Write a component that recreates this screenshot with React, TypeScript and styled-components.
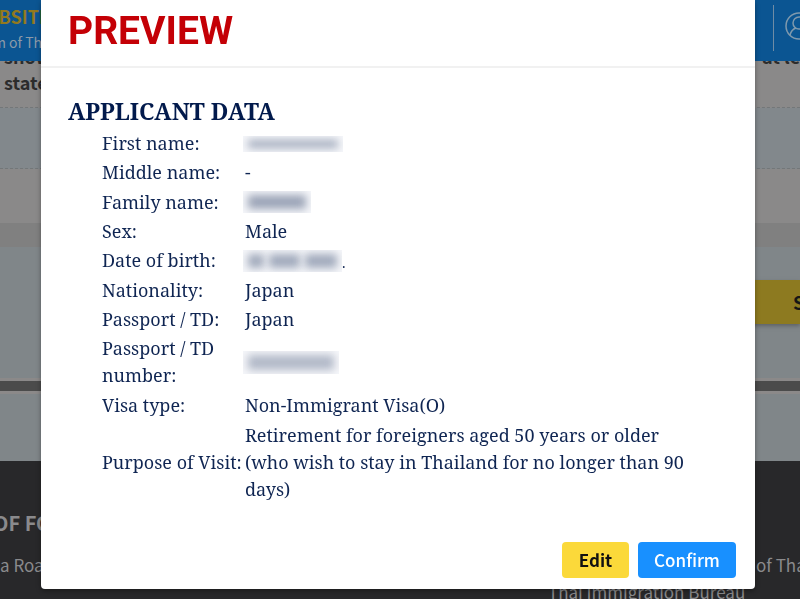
import React from "react";
import styled, { createGlobalStyle } from "styled-components";

const ui = `"Noto Sans CJK JP", "Noto Sans", sans-serif`;
const serif = `"Noto Serif", "DejaVu Serif Condensed", "DejaVu Serif", serif`;

const Global = createGlobalStyle`
  * { box-sizing: border-box; }
  html, body { margin: 0; height: 100%; overflow: hidden; }
  body { font-family: ${ui}; background: #28282a; }
`;

const Page = styled.div`
  min-height: 100vh;
  display: flex;
  flex-direction: column;
  overflow: hidden;
`;

const Header = styled.header`
  height: 61px;
  flex: none;
  display: flex;
  justify-content: space-between;
  background: #0b5592;
  overflow: hidden;
`;

const Brand = styled.div`
  width: 50px;
  padding-top: 3px;
  display: flex;
  flex-direction: column;
  align-items: flex-end;
  white-space: nowrap;
`;

const Site = styled.strong`
  font-size: 18px;
  line-height: 26px;
  color: #92791f;
`;

const Tagline = styled.span`
  font-size: 14px;
  line-height: 26px;
  color: #8c9aa8;
`;

const Account = styled.button`
  width: 27px;
  height: 46px;
  margin: 5px 0 0;
  padding: 0 0 0 11px;
  border: 0;
  border-left: 1px solid #6f8ca5;
  background: none;
  color: #7f99ad;
  overflow: hidden;
`;

const Band = styled.div<{ $h: number; $bg: string; $dashed?: boolean }>`
  height: ${(p) => p.$h}px;
  flex: none;
  background: ${(p) => p.$bg};
  border-bottom: ${(p) => (p.$dashed ? "1px dashed #737779" : "0")};
`;

const Notice = styled(Band)`
  display: flex;
  justify-content: space-between;
  overflow: hidden;
  font-size: 18px;
  font-weight: 700;
  line-height: 26px;
  color: #2c2c2c;
  white-space: nowrap;
`;

const NoticeText = styled.p`
  width: 42px;
  margin: -18px 0 0;
  padding-left: 4px;
`;

const FormArea = styled(Band)`
  display: flex;
  justify-content: flex-end;
  align-items: flex-start;
  padding-top: 33px;
`;

const Submit = styled.button`
  width: 60px;
  height: 44px;
  padding: 0 0 0 53px;
  border: 0;
  background: #8d7a20;
  box-shadow: 0 2px 4px #5d6265;
  color: #161616;
  font: 700 18px ${ui};
  text-align: left;
  overflow: hidden;
`;

const Rule = styled.hr`
  flex: none;
  width: 100%;
  height: 16px;
  margin: 0;
  border: solid #8b8989;
  border-width: 3px 0;
  background: #4b4b4b;
`;

const Footer = styled.footer`
  flex: 1;
  display: flex;
  justify-content: space-between;
  padding-top: 48px;
  background: #28282a;
  color: #8a8a8c;
  font-size: 17px;
  line-height: 27px;
  white-space: nowrap;
  overflow: hidden;
`;

const FootCol = styled.div<{ $w: number; $pad: number }>`
  width: ${(p) => p.$w}px;
  padding-top: ${(p) => p.$pad}px;
  overflow: hidden;
`;

const FootTitle = styled.h3`
  margin: 0 0 14px -7px;
  font-size: 20px;
  line-height: 28px;
`;

const FootLine = styled.p<{ $right?: boolean }>`
  margin: 0;
  padding-left: ${(p) => (p.$right ? "208px" : "0")};
`;

const Overlay = styled.div`
  position: fixed;
  inset: 0;
  padding: 0 45px 10px 41px;
  display: flex;
`;

const Dialog = styled.section`
  flex: 1;
  display: flex;
  flex-direction: column;
  background: #fff;
  border-radius: 0 0 4px 4px;
  box-shadow: 0 2px 5px rgba(0, 0, 0, 0.35);
`;

const DialogHead = styled.header`
  height: 68px;
  padding: 0 27px;
  border-bottom: 2px solid #f1f1f1;
`;

const Title = styled.h1`
  margin: 0;
  font-family: Roboto, sans-serif;
  font-size: 39px;
  line-height: 62px;
  color: #c40006;
`;

const DialogBody = styled.div`
  flex: 1;
  padding: 27px 27px 0;
  font-family: ${serif};
  color: #0f2552;
`;

const Section = styled.h2`
  margin: 0;
  font-size: 23px;
  line-height: 32px;
  color: #021a4c;
`;

const Data = styled.table`
  width: 600px;
  max-width: 100%;
  height: 375px;
  margin: 2px 0 0 34px;
  border-collapse: collapse;
  font-size: 18px;
  line-height: 27px;
`;

const Label = styled.th`
  width: 143px;
  padding: 1px 0;
  font-weight: 400;
  text-align: left;
  vertical-align: middle;
  white-space: pre;
`;

const Value = styled.td`
  padding: 1px 0;
  vertical-align: middle;
`;

const ValueLine = styled.div`
  display: flex;
  align-items: center;
  height: 27px;
  margin-left: -2px;
`;

const Hidden = styled.span<{ $w: number; $h: number }>`
  display: flex;
  gap: 5px;
  width: ${(p) => p.$w}px;
  height: ${(p) => p.$h}px;
  padding: 4px 5px;
  background: #f6f7fa;
  overflow: hidden;
`;

const Smudge = styled.span<{ $grow: number; $tone: string }>`
  flex: ${(p) => p.$grow};
  background: ${(p) => p.$tone};
  filter: blur(4px);
`;

const Tail = styled.span`
  align-self: flex-end;
  font-size: 14px;
  line-height: 22px;
`;

const Actions = styled.footer`
  display: flex;
  justify-content: flex-end;
  gap: 9px;
  padding: 0 19px 11px;
`;

const Action = styled.button<{ $primary?: boolean }>`
  width: ${(p) => (p.$primary ? 98 : 67)}px;
  height: 36px;
  padding: 0 0 2px;
  border: 0;
  border-radius: 4px;
  background: ${(p) => (p.$primary ? "#1890ff" : "#fbd93a")};
  color: ${(p) => (p.$primary ? "#fff" : "#111")};
  font: ${(p) => (p.$primary ? 500 : 700)} 17px ${ui};
`;

interface RedactedProps {
  width: number;
  height: number;
  tone: string;
  parts?: number[];
  tail?: string;
}

function Redacted({ width, height, tone, parts = [1], tail }: RedactedProps) {
  return (
    <ValueLine>
      <Hidden $w={width} $h={height}>
        {parts.map((grow, i) => <Smudge key={i} $grow={grow} $tone={tone} />)}
      </Hidden>
      {tail && <Tail>{tail}</Tail>}
    </ValueLine>
  );
}

const rows: [string, React.ReactNode][] = [
  ["First name:", <Redacted width={100} height={16} tone="#a0a9bb" />],
  ["Middle name:", "-"],
  ["Family name:", <Redacted width={68} height={22} tone="#9aa3b6" />],
  ["Sex:", "Male"],
  ["Date of birth:", <Redacted width={99} height={22} tone="#a0a9bb" parts={[2, 4, 4]} tail="." />],
  ["Nationality:", "Japan"],
  ["Passport / TD:", "Japan"],
  ["Passport / TD\nnumber:", <Redacted width={96} height={23} tone="#b1b8c7" />],
  ["Visa type:", "Non-Immigrant Visa(O)"],
  ["Purpose of Visit:", "Retirement for foreigners aged 50 years or older (who wish to stay in Thailand for no longer than 90 days)"],
];

export default function App() {
  return (
    <>
      <Global />
      <Page>
        <Header>
          <Brand><Site>WEBSITE</Site><Tagline>Kingdom of Tha</Tagline></Brand>
          <Account aria-label="Account">
            <svg width="29" height="29" viewBox="0 0 29 29" fill="none" stroke="currentColor" strokeWidth="1.5">
              <circle cx="14" cy="14" r="13" />
              <circle cx="14" cy="11" r="6" />
              <path d="M5 23c1-4 3-6 6-7M17 16c3 1 6 3 7 7" />
            </svg>
          </Account>
        </Header>
        <Notice $h={47} $bg="#8a8989" $dashed>
          <NoticeText>shown<br />state</NoticeText>
          <NoticeText>at least</NoticeText>
        </Notice>
        <Band $h={61} $bg="#82888c" $dashed />
        <Band $h={54} $bg="#8a8989" />
        <Band $h={24} $bg="#808080" />
        <FormArea $h={131} $bg="#808689"><Submit>Submit</Submit></FormArea>
        <Rule />
        <Band $h={67} $bg="#808689" />
        <Footer>
          <FootCol $w={41} $pad={0}>
            <FootTitle>OF FOREIGN</FootTitle>
            <FootLine>a Road</FootLine>
          </FootCol>
          <FootCol $w={252} $pad={42}>
            <FootLine $right>of Thailand</FootLine>
            <FootLine>Thai Immigration Bureau</FootLine>
          </FootCol>
        </Footer>
      </Page>
      <Overlay>
        <Dialog role="dialog" aria-labelledby="preview-title">
          <DialogHead><Title id="preview-title">PREVIEW</Title></DialogHead>
          <DialogBody>
            <Section>APPLICANT DATA</Section>
            <Data>
              <tbody>
                {rows.map(([label, value]) => (
                  <tr key={label}>
                    <Label scope="row">{label}</Label>
                    <Value>{value}</Value>
                  </tr>
                ))}
              </tbody>
            </Data>
          </DialogBody>
          <Actions>
            <Action type="button">Edit</Action>
            <Action type="button" $primary>Confirm</Action>
          </Actions>
        </Dialog>
      </Overlay>
    </>
  );
}
